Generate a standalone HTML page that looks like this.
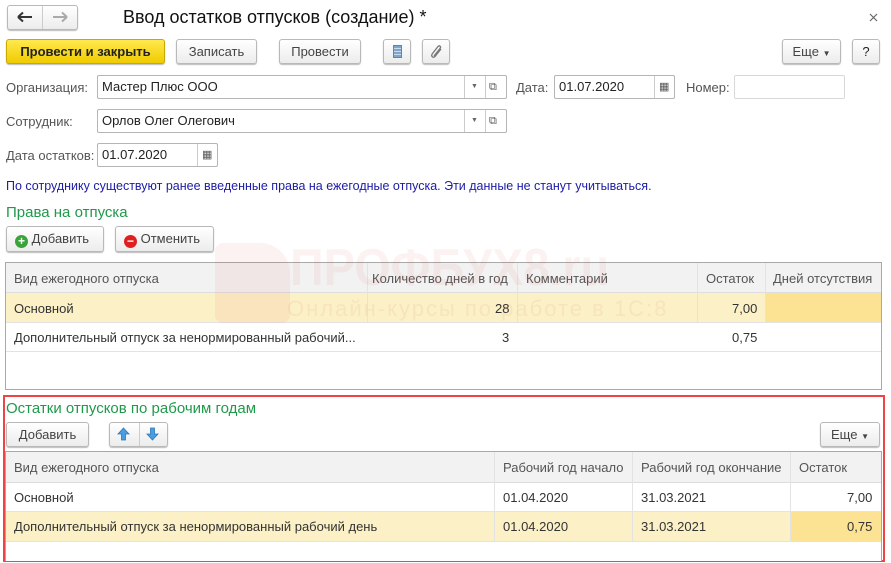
<!DOCTYPE html>
<html><head><meta charset="utf-8">
<style>
*{box-sizing:border-box;margin:0;padding:0}
body{width:891px;height:563px;background:#fff;font-family:"Liberation Sans",Arial,sans-serif;font-size:13px;color:#333;position:relative;overflow:hidden}
.a{position:absolute;white-space:nowrap}
.btn{position:absolute;border:1px solid #b9b9b9;border-radius:3px;background:linear-gradient(#fff,#ececec);box-shadow:0 1px 1px #bbb;text-align:center;color:#444;font-size:13px}
.fld{position:absolute;border:1px solid #b5b5b5;border-radius:2px;background:#fff;color:#222;padding-left:4px}
.lbl{position:absolute;color:#555;font-size:13px}
.vl{position:absolute;top:0;bottom:0;width:1px;background:#ccc}
.tbl{position:absolute;border:1px solid #a9a9a9;background:#fff}
.hdr{position:absolute;left:0;right:0;top:0;background:#f2f2f2;border-bottom:1px solid #ddd}
.cell{position:absolute;white-space:nowrap;color:#333}
</style></head><body>
<!-- nav -->
<div class="btn" style="left:7px;top:5px;width:71px;height:25px"></div>
<div class="a" style="left:42px;top:6px;width:1px;height:23px;background:#ccc"></div>
<svg class="a" style="left:17px;top:11px" width="16" height="12" viewBox="0 0 16 12"><path d="M1 6H15M1 6L6 1.5M1 6L6 10.5" stroke="#333" stroke-width="2" fill="none"/></svg>
<svg class="a" style="left:52px;top:11px" width="16" height="12" viewBox="0 0 16 12"><path d="M1 6H15M15 6L10 1.5M15 6L10 10.5" stroke="#aaa" stroke-width="2" fill="none"/></svg>
<div class="a" style="left:123px;top:7px;font-size:18px;color:#111">Ввод остатков отпусков (создание) *</div>
<svg class="a" style="left:869px;top:13px" width="9" height="9" viewBox="0 0 9 9"><path d="M1 1L8 8M8 1L1 8" stroke="#666" stroke-width="1.2"/></svg>
<!-- toolbar -->
<div class="btn" style="left:6px;top:39px;width:159px;height:25px;background:linear-gradient(#ffe94d,#f0cb00);border-color:#c9a800;color:#222;font-weight:bold;line-height:23px">Провести и закрыть</div>
<div class="btn" style="left:176px;top:39px;width:81px;height:25px;line-height:23px">Записать</div>
<div class="btn" style="left:279px;top:39px;width:82px;height:25px;line-height:23px">Провести</div>
<div class="btn" style="left:383px;top:39px;width:28px;height:25px"><div style="position:absolute;left:9px;top:5px;width:9px;height:13px;background:repeating-linear-gradient(#7fa6c9 0 2px,#c8dbec 2px 3px);border:1px solid #5d87ad"></div></div>
<div class="btn" style="left:422px;top:39px;width:28px;height:25px"><svg style="position:absolute;left:7px;top:4px" width="14" height="16" viewBox="0 0 14 16"><path d="M4 12L10 4.5C11.5 2.5 9.5 1 8 2.5L2.5 9.5C0.5 12 3 14.5 5 12.5L11 5" stroke="#777" stroke-width="1.3" fill="none"/></svg></div>
<div class="btn" style="left:782px;top:39px;width:59px;height:25px;line-height:23px">Еще <span style="font-size:8px">▼</span></div>
<div class="btn" style="left:852px;top:39px;width:28px;height:25px;line-height:23px;color:#222">?</div>
<!-- fields -->
<div class="lbl" style="left:6px;top:80px">Организация:</div>
<div class="fld" style="left:97px;top:75px;width:410px;height:24px;line-height:22px">Мастер Плюс ООО<div class="vl" style="left:366px"></div><div class="vl" style="left:387px"></div><span class="a" style="left:373px;top:0;font-size:7px;color:#666">▼</span><span class="a" style="left:391px;top:0;font-size:11px;color:#555">⧉</span></div>
<div class="lbl" style="left:516px;top:80px">Дата:</div>
<div class="fld" style="left:554px;top:75px;width:121px;height:24px;line-height:22px">01.07.2020<div class="vl" style="left:99px"></div><span class="a" style="left:104px;top:0;font-size:11px;color:#555">▦</span></div>
<div class="lbl" style="left:686px;top:80px">Номер:</div>
<div class="fld" style="left:734px;top:75px;width:111px;height:24px;border-color:#d8d8d8"></div>
<div class="lbl" style="left:6px;top:114px">Сотрудник:</div>
<div class="fld" style="left:97px;top:109px;width:410px;height:24px;line-height:22px">Орлов Олег Олегович<div class="vl" style="left:366px"></div><div class="vl" style="left:387px"></div><span class="a" style="left:373px;top:0;font-size:7px;color:#666">▼</span><span class="a" style="left:391px;top:0;font-size:11px;color:#555">⧉</span></div>
<div class="lbl" style="left:6px;top:148px">Дата остатков:</div>
<div class="fld" style="left:97px;top:143px;width:121px;height:24px;line-height:22px">01.07.2020<div class="vl" style="left:99px"></div><span class="a" style="left:104px;top:0;font-size:11px;color:#555">▦</span></div>
<div class="a" style="left:6px;top:179px;color:#1c1ca8;font-size:12.5px">По сотруднику существуют ранее введенные права на ежегодные отпуска. Эти данные не станут учитываться.</div>
<div class="a" style="left:6px;top:204px;color:#1e9a4a;font-size:15px">Права на отпуска</div>
<div class="btn" style="left:6px;top:226px;width:98px;height:26px;line-height:24px;text-align:left;padding-left:8px"><span style="display:inline-block;width:13px;height:13px;border-radius:50%;background:#3aa33a;color:#fff;font-size:12px;line-height:13px;text-align:center;font-weight:bold;vertical-align:-2px">+</span> Добавить</div>
<div class="btn" style="left:115px;top:226px;width:99px;height:26px;line-height:24px;text-align:left;padding-left:8px"><span style="display:inline-block;width:13px;height:13px;border-radius:50%;background:#e02020;color:#fff;font-size:12px;line-height:12px;text-align:center;font-weight:bold;vertical-align:-2px">−</span> Отменить</div>
<!-- table1 -->
<div class="tbl" style="left:5px;top:262px;width:877px;height:128px">
<div class="hdr" style="height:30px"></div>
<div class="a" style="left:0;top:30px;width:875px;height:29px;background:#fbf0c6"></div>
<div class="a" style="left:759px;top:30px;width:116px;height:29px;background:#fce293"></div>
<div class="a" style="left:0;top:59px;width:875px;height:1px;background:#e3e3e3"></div>
<div class="a" style="left:0;top:88px;width:875px;height:1px;background:#e3e3e3"></div>
<div class="a" style="left:361px;top:0;width:1px;height:59px;background:#e3e3e3"></div>
<div class="a" style="left:511px;top:0;width:1px;height:59px;background:#e3e3e3"></div>
<div class="a" style="left:691px;top:0;width:1px;height:59px;background:#e3e3e3"></div>
<div class="a" style="left:759px;top:0;width:1px;height:59px;background:#e3e3e3"></div>
<div class="cell" style="left:8px;top:8px;color:#555">Вид ежегодного отпуска</div>
<div class="cell" style="left:366px;top:8px;color:#555">Количество дней в год</div>
<div class="cell" style="left:520px;top:8px;color:#555">Комментарий</div>
<div class="cell" style="left:700px;top:8px;color:#555">Остаток</div>
<div class="cell" style="left:767px;top:8px;color:#555">Дней отсутствия</div>
<div class="cell" style="left:8px;top:38px">Основной</div>
<div class="cell" style="left:489px;top:38px">28</div>
<div class="cell" style="left:726px;top:38px">7,00</div>
<div class="cell" style="left:8px;top:67px">Дополнительный отпуск за ненормированный рабочий...</div>
<div class="cell" style="left:496px;top:67px">3</div>
<div class="cell" style="left:726px;top:67px">0,75</div>
</div>
<!-- watermark -->
<div class="a" style="left:215px;top:243px;width:75px;height:80px;background:rgba(230,90,90,0.08);border-radius:8px 30px 8px 8px"></div>
<div class="a" style="left:290px;top:238px;font-size:52px;font-weight:bold;color:rgba(230,90,90,0.08);transform:scaleX(0.9);transform-origin:left">ПРОФБУХ8.ru</div>
<div class="a" style="left:287px;top:296px;font-size:22px;color:rgba(200,90,90,0.08);letter-spacing:2px">Онлайн-курсы по работе в 1С:8</div>
<!-- red box -->
<div class="a" style="left:3px;top:395px;width:882px;height:167px;border:2px solid #f04444"></div>
<div class="a" style="left:6px;top:400px;color:#1e9a4a;font-size:15px">Остатки отпусков по рабочим годам</div>
<div class="btn" style="left:6px;top:422px;width:83px;height:25px;line-height:23px">Добавить</div>
<div class="btn" style="left:109px;top:422px;width:59px;height:25px"></div>
<div class="a" style="left:139px;top:423px;width:1px;height:23px;background:#ccc"></div>
<svg class="a" style="left:117px;top:427px" width="13" height="14" viewBox="0 0 13 14"><path d="M6.5 1L12 7H8.5V13H4.5V7H1Z" fill="#4a9ee0" stroke="#2a78bb" stroke-width="0.8"/></svg>
<svg class="a" style="left:146px;top:427px" width="13" height="14" viewBox="0 0 13 14"><path d="M6.5 13L12 7H8.5V1H4.5V7H1Z" fill="#4a9ee0" stroke="#2a78bb" stroke-width="0.8"/></svg>
<div class="btn" style="left:820px;top:422px;width:60px;height:25px;line-height:23px">Еще <span style="font-size:8px">▼</span></div>
<div class="tbl" style="left:5px;top:451px;width:877px;height:110px;border-bottom:none">
<div class="hdr" style="height:31px"></div>
<div class="a" style="left:0;top:60px;width:875px;height:29px;background:#fbf0c6"></div>
<div class="a" style="left:784px;top:60px;width:91px;height:29px;background:#fce293"></div>
<div class="a" style="left:0;top:59px;width:875px;height:1px;background:#e3e3e3"></div>
<div class="a" style="left:0;top:89px;width:875px;height:1px;background:#e3e3e3"></div>
<div class="a" style="left:488px;top:0;width:1px;height:89px;background:#e3e3e3"></div>
<div class="a" style="left:626px;top:0;width:1px;height:89px;background:#e3e3e3"></div>
<div class="a" style="left:784px;top:0;width:1px;height:89px;background:#e3e3e3"></div>
<div class="cell" style="left:8px;top:8px;color:#555">Вид ежегодного отпуска</div>
<div class="cell" style="left:497px;top:8px;color:#555">Рабочий год начало</div>
<div class="cell" style="left:635px;top:8px;color:#555">Рабочий год окончание</div>
<div class="cell" style="left:793px;top:8px;color:#555">Остаток</div>
<div class="cell" style="left:8px;top:38px">Основной</div>
<div class="cell" style="left:497px;top:38px">01.04.2020</div>
<div class="cell" style="left:635px;top:38px">31.03.2021</div>
<div class="cell" style="left:841px;top:38px">7,00</div>
<div class="cell" style="left:8px;top:67px">Дополнительный отпуск за ненормированный рабочий день</div>
<div class="cell" style="left:497px;top:67px">01.04.2020</div>
<div class="cell" style="left:635px;top:67px">31.03.2021</div>
<div class="cell" style="left:841px;top:67px">0,75</div>
</div>
</body></html>
